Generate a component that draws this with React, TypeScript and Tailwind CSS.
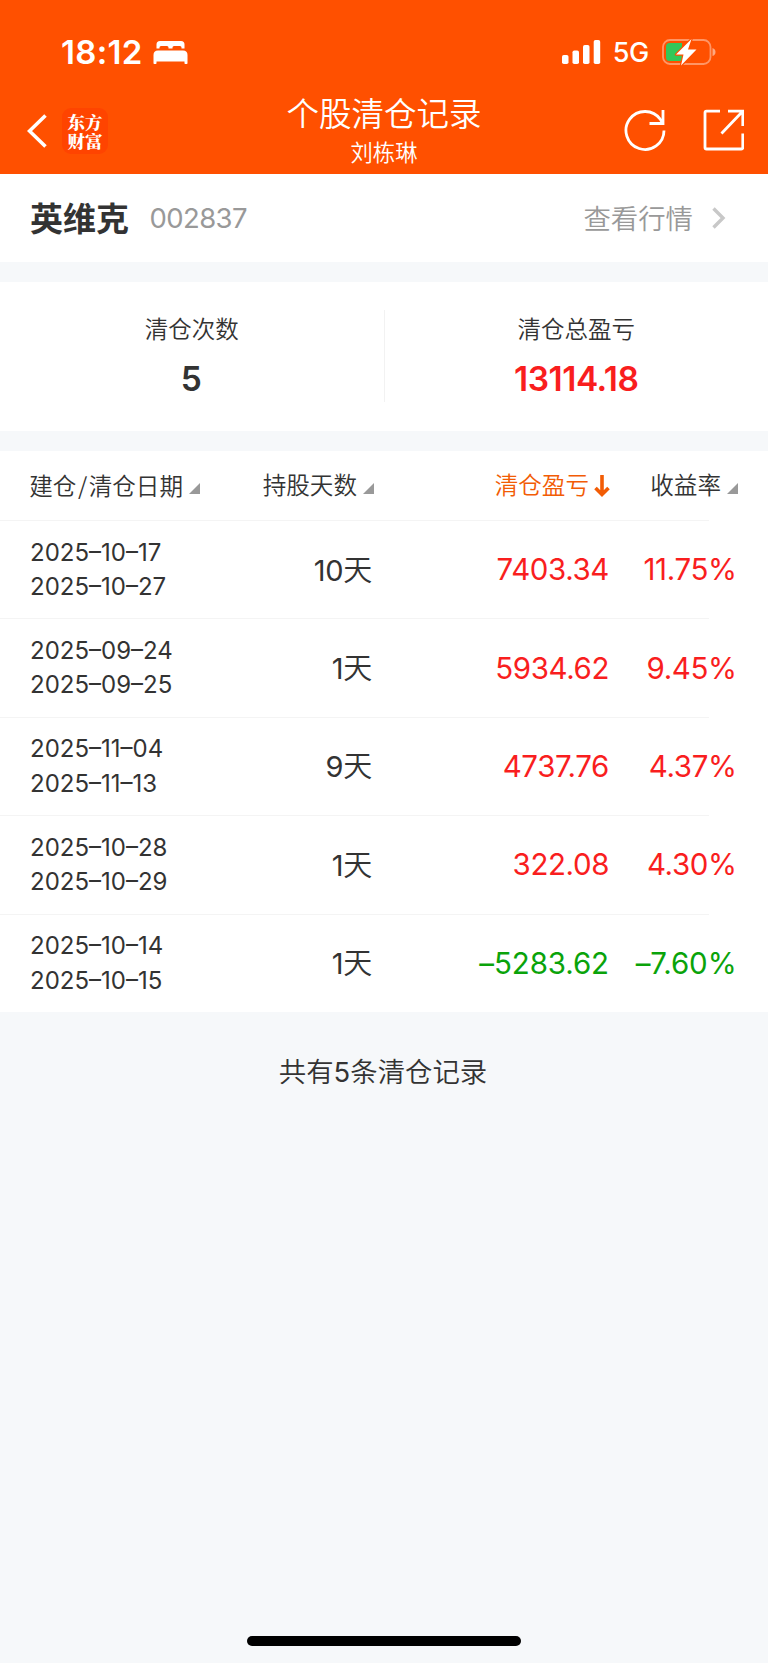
interface RecordRow {
  open: string;
  close: string;
  days: number;
  profit: string;
  rate: string;
}

const records: RecordRow[] = [
  { open: '2025–10–17', close: '2025–10–27', days: 10, profit: '7403.34', rate: '11.75%' },
  { open: '2025–09–24', close: '2025–09–25', days: 1, profit: '5934.62', rate: '9.45%' },
  { open: '2025–11–04', close: '2025–11–13', days: 9, profit: '4737.76', rate: '4.37%' },
  { open: '2025–10–28', close: '2025–10–29', days: 1, profit: '322.08', rate: '4.30%' },
  { open: '2025–10–14', close: '2025–10–15', days: 1, profit: '–5283.62', rate: '–7.60%' },
];

export default function App() {
  return (
    <div className="flex h-[1663px] w-[768px] flex-col overflow-hidden bg-[#f6f8fa] font-[Inter,'Noto_Sans_CJK_SC',sans-serif] font-[350] text-[#333]">
      <header className="h-[173.500px] shrink-0 bg-[#ff5000] text-white">
        <StatusBar />
        <NavBar />
      </header>

      <section className="flex h-[88.500px] shrink-0 items-center bg-white pt-px pl-[30px] pr-[42px]">
        <h2 className="pt-[2px] text-[33px] leading-none font-bold">英维克</h2>
        <span className="ml-[20.5px] text-[27.5px] leading-none font-normal tracking-[-0.6px] text-[#999]">
          002837
        </span>
        <span className="ml-auto pt-[2px] text-[27.4px] leading-none text-[#999]">查看行情</span>
        <svg viewBox="0 0 14 22" className="ml-[19px] h-[22px] w-[14px]" fill="none">
          <path d="M1.5 1.5 11 11l-9.500 9.500" stroke="#c8c8c8" strokeWidth="3.400" />
        </svg>
      </section>

      <section className="mt-5 flex h-[149px] shrink-0 bg-white pt-[28px]">
        <Stat label="清仓次数" value="5" />
        <div className="h-[92px] w-px bg-[#f2f2f2]" />
        <Stat label="清仓总盈亏" value="13114.18" red />
      </section>

      <section className="mt-5 shrink-0 bg-white">
        <div className="grid h-[69px] grid-cols-[170px_174px_236px_128px] items-center pt-px pl-[30px] text-[23.6px] leading-none">
          <SortHead label="建仓/清仓日期" />
          <SortHead label="持股天数" />
          <div className="flex items-center justify-end text-[#f25c05]">
            <span>清仓盈亏</span>
            <svg viewBox="0 0 16 24" className="-mt-px ml-[5px] h-6 w-4" fill="none">
              <path d="M8 1v19M1.500 14 8 20.500l6.500-6.500" stroke="currentColor" strokeWidth="3.600" />
            </svg>
          </div>
          <SortHead label="收益率" />
        </div>
        {records.map((r) => (
          <Row key={r.open} record={r} />
        ))}
      </section>

      <p className="mt-[47px] pr-[2px] text-center text-[27.4px] leading-none">
        共有<span className="font-normal">5</span>条清仓记录
      </p>

      <div className="mx-auto mt-auto mb-[17px] h-[10px] w-[274px] shrink-0 rounded-full bg-black" />
    </div>
  );
}

function StatusBar() {
  return (
    <div className="flex h-[84px] items-center pt-[19px] pr-[51px] pl-[61px]">
      <span className="pt-px text-[33px] leading-none font-semibold tracking-[0.3px]">18:12</span>
      <svg viewBox="0 0 35 24" className="ml-[10px] h-6 w-[35px]" fill="currentColor">
        <path d="M3.500 8.500V4.500Q3.500 1 7 1h21q3.500 0 3.500 3.500v4h-3V7.500Q28.500 6 27 6h-6q-1.500 0-1.500 1.500v1h-4v-1Q15.500 6 14 6H8Q6.500 6 6.500 7.500v1z" />
        <path d="M5 10.500h25q4.500 0 4.500 4.500v8.200q0 .8-.8.800h-1.400q-.8 0-.8-.8V21.500h-28v1.700q0 .8-.8.800H1.300q-.8 0-.8-.8V15q0-4.500 4.500-4.500z" />
      </svg>
      <svg viewBox="0 0 39 24" className="ml-auto h-6 w-[39px]" fill="currentColor">
        <rect x="0" y="15" width="6.500" height="9" rx="1.800" />
        <rect x="10.500" y="10.500" width="6.500" height="13.500" rx="1.800" />
        <rect x="21" y="5" width="6.500" height="19" rx="1.800" />
        <rect x="31.700" y="0" width="6.500" height="24" rx="1.800" />
      </svg>
      <span className="ml-[12px] pt-[2px] text-[27px] leading-none font-medium tracking-[-0.3px]">5G</span>
      <svg viewBox="0 0 55 28" className="ml-[13px] h-7 w-[55px]" fill="none">
        <rect x="1" y="2" width="47.500" height="24" rx="7" stroke="#fff" strokeOpacity="0.4" strokeWidth="1.800" />
        <path d="M50.500 10q3 1 3 4t-3 4z" fill="#fff" fillOpacity="0.5" />
        <path d="M7.500 5H20v18H7.500Q4 23 4 19.500v-11Q4 5 7.500 5z" fill="#34c759" />
        <path
          d="M29.500 1 14 16.500h7.500L19 27.500 34.500 11.500H26z"
          fill="#fff"
          stroke="#ff5000"
          strokeWidth="2.400"
          paintOrder="stroke"
          strokeLinejoin="round"
        />
      </svg>
    </div>
  );
}

function NavBar() {
  return (
    <div className="grid h-[89px] grid-cols-[1fr_240px_1fr]">
      <div className="flex items-center pl-[27px]">
        <svg viewBox="0 0 20 34" className="mt-[5px] h-[34px] w-5" fill="none">
          <path d="M18.500 1.500 2.500 17l16 15.500" stroke="currentColor" strokeWidth="3.600" />
        </svg>
        <div className="mt-[4px] ml-[15px] flex h-[46px] w-[46px] items-center justify-center rounded-[9px] bg-[#ff4400]">
          <span className="w-[36px] text-center font-['Noto_Serif_CJK_SC','Noto_Sans_CJK_SC',serif] text-[17.500px] leading-[19px] font-black">
            东方财富
          </span>
        </div>
      </div>
      <div className="flex flex-col items-center pt-[14px]">
        <h1 className="text-[32.500px] leading-[34px]">个股清仓记录</h1>
        <span className="mt-[9px] text-[22.300px] leading-[24px]">刘栋琳</span>
      </div>
      <div className="flex items-start justify-end gap-[37px] pt-[25px] pr-[24px]">
        <svg viewBox="0 0 42 42" className="h-[42px] w-[42px]" fill="none" stroke="currentColor" strokeWidth="2.800">
          <path d="M40 21.500A19 19 0 1 1 36.500 10.500L38.500 14" />
          <path d="M39 1v13.500H25.500" />
        </svg>
        <svg viewBox="0 0 41 42" className="h-[42px] w-[41px]" fill="none" stroke="currentColor" strokeWidth="2.800">
          <path d="M17 2.200H3.500Q2 2.200 2 3.700V38.500Q2 40 3.500 40h34.800q1.500 0 1.500-1.500V24.500" />
          <path d="M25 2.200h14.800V17M39 3 18.500 24.500" />
        </svg>
      </div>
    </div>
  );
}

function Stat({ label, value, red }: { label: string; value: string; red?: boolean }) {
  return (
    <div className="flex flex-1 flex-col items-center pt-[7.5px] leading-none">
      <span className="text-[23.500px]">{label}</span>
      <span
        className={
          red
            ? 'mt-[22px] text-[33.500px] font-semibold tracking-[-0.5px] text-[#f91e1e]'
            : 'mt-[22px] pr-px text-[33.500px] font-semibold'
        }
      >
        {value}
      </span>
    </div>
  );
}

function SortHead({ label }: { label: string }) {
  const [head, tail] = label.split('/');

  return (
    <div className="flex items-center justify-end">
      <span className="whitespace-nowrap">
        {head}
        {tail && <span className="mx-[1.5px] font-['Noto_Sans_CJK_SC']">/</span>}
        {tail}
      </span>
      <svg viewBox="0 0 11 11" className="mt-[4px] ml-[6px] h-[11px] w-[11px] shrink-0">
        <path d="M11 0v11H0z" fill="#999" />
      </svg>
    </div>
  );
}

function Row({ record }: { record: RecordRow }) {
  const color = record.profit.startsWith('–')
    ? 'tracking-[-0.1px] text-[#0aa30a]'
    : 'tracking-[-0.4px] text-[#f91e1e]';

  return (
    <div className="h-[98.4px]">
      <div className="h-px w-[709px] bg-[#f4f4f4]" />
      <div className="grid h-[97px] grid-cols-[171px_171px_237px_127.500px] items-center pt-px pl-[30px] text-right text-[29.500px] leading-none font-normal">
        <div className="text-left text-[24px] leading-[34.300px] whitespace-nowrap">
          <div>{record.open}</div>
          <div>{record.close}</div>
        </div>
        <div className="text-[29px] tracking-[-0.3px]">
          {record.days}
          <span className="font-[350]">天</span>
        </div>
        <div className={color}>{record.profit}</div>
        <div className={color}>{record.rate}</div>
      </div>
    </div>
  );
}
